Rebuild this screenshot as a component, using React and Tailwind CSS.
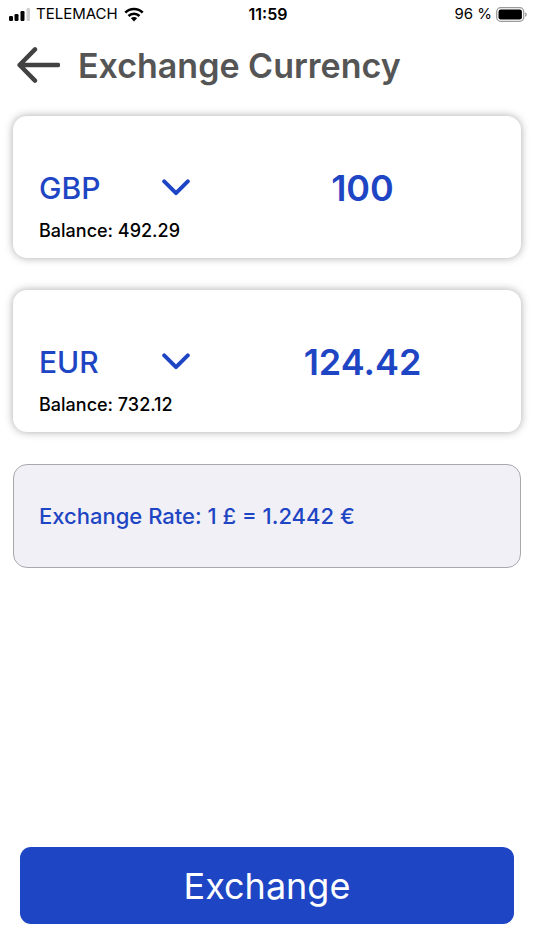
import { useState } from "react"

const currencies = {
    GBP: { symbol: "£", balance: "492.29" },
    EUR: { symbol: "€", balance: "732.12" }
}

const RATE = 1.2442

function SignalIcon() {
    return (
        <svg viewBox="0 0 22 13" className="w-[22px] h-[13px]" aria-hidden="true">
            <rect x="1" y="8" width="4" height="5" rx="1.2" />
            <rect x="6.5" y="6" width="4" height="7" rx="1.2" />
            <rect x="12.5" y="3" width="4" height="10" rx="1.2" />
            <rect x="18.5" y="0" width="3.5" height="13" rx="1.2" fill="#cfcfcf" />
        </svg>
    )
}

function WifiIcon() {
    return (
        <svg viewBox="0 0 20 15" className="w-5 h-[15px]" fill="none" stroke="#000" strokeWidth="2.6" aria-hidden="true">
            <path d="M1.3 5.6C6.2 0.7 13.8 0.7 18.7 5.6" />
            <path d="M4.5 9C7.6 5.9 12.4 5.9 15.5 9" />
            <path d="M10 14.4L6.9 11.3C8.6 9.7 11.4 9.7 13.1 11.3Z" fill="#000" stroke="none" />
        </svg>
    )
}

function BatteryIcon() {
    return (
        <svg viewBox="0 0 32 15" className="w-8 h-[15px]" aria-hidden="true">
            <rect x="0.7" y="0.7" width="27" height="13.6" rx="4" fill="none" stroke="#9a9a9a" strokeWidth="1.3" />
            <rect x="2.5" y="2.5" width="23.4" height="10" rx="2.2" />
            <path d="M29.2 5.2C31.3 6 31.3 9 29.2 9.8Z" fill="#9a9a9a" />
        </svg>
    )
}

function StatusBar() {
    return (
        <div className="grid grid-cols-3 items-center h-7 pl-2 pr-1.5 text-[15px] text-black">
            <div className="flex items-center gap-1.5">
                <SignalIcon />
                <span>TELEMACH</span>
                <WifiIcon />
            </div>
            <span className="text-center text-[16px] font-semibold">11:59</span>
            <div className="flex items-center justify-end gap-1">
                <span>96 %</span>
                <BatteryIcon />
            </div>
        </div>
    )
}

function CurrencyCard({ id, currency, onCurrency, amount, onAmount }) {
    return (
        <section className="h-[142px] px-[26px] pt-[50px] rounded-[14px] bg-white shadow-[0_0_8px_rgba(0,0,0,0.34)]">
            <div className="flex items-center gap-10 h-11 text-[#1e45c3]">
                <div className="relative w-[151px] shrink-0">
                    <select
                        aria-label={`Currency ${id}`}
                        value={currency}
                        onChange={(e) => onCurrency(e.target.value)}
                        className="w-full h-11 appearance-none bg-transparent text-[30px] font-medium outline-none"
                    >
                        {Object.keys(currencies).map((code) => (
                            <option key={code} value={code}>{code}</option>
                        ))}
                    </select>
                    <svg
                        viewBox="0 0 28 17"
                        className="absolute right-0 top-[13px] w-7 h-[17px] pointer-events-none"
                        fill="none"
                        stroke="currentColor"
                        strokeWidth="4"
                        strokeLinecap="round"
                        strokeLinejoin="round"
                        aria-hidden="true"
                    >
                        <path d="M2.2 2.4L14 14.2L25.8 2.4" />
                    </svg>
                </div>
                <input
                    aria-label={`Amount ${id}`}
                    type="text"
                    inputMode="decimal"
                    value={amount}
                    onChange={(e) => onAmount(e.target.value)}
                    className="w-full min-w-0 h-11 bg-transparent text-center text-[36px] font-semibold outline-none"
                />
            </div>
            <p className="mt-[9px] text-[18px] leading-6 font-medium text-black">
                Balance: {currencies[currency].balance}
            </p>
        </section>
    )
}

export default function App() {
    const [from, setFrom] = useState("GBP")
    const [to, setTo] = useState("EUR")
    const [amount, setAmount] = useState("100")
    const [result, setResult] = useState("124.42")

    const handleAmount = (value) => {
        setAmount(value)
        setResult((Number(value) * RATE).toFixed(2))
    }

    return (
        <div className="min-h-screen flex flex-col bg-white font-['Inter','Liberation_Sans',sans-serif]">
            <StatusBar />

            <header className="flex items-center gap-[18px] h-[74px] px-[17px]">
                <button type="button" aria-label="Back">
                    <svg
                        viewBox="0 0 43 36"
                        className="w-[43px] h-9"
                        fill="none"
                        stroke="#424242"
                        strokeWidth="4.4"
                        strokeLinecap="round"
                        strokeLinejoin="round"
                        aria-hidden="true"
                    >
                        <path d="M18 2.4L2.6 18L18 33.6M2.6 18H41" />
                    </svg>
                </button>
                <h1 className="text-[34px] font-semibold text-[#555555]">Exchange Currency</h1>
            </header>

            <main className="flex-1 flex flex-col gap-8 px-[13px] pt-[14px]">
                <CurrencyCard id="from" currency={from} onCurrency={setFrom} amount={amount} onAmount={handleAmount} />
                <CurrencyCard id="to" currency={to} onCurrency={setTo} amount={result} onAmount={setResult} />
                <section className="flex items-center h-[104px] px-[25px] rounded-[14px] border border-[#a9a9ad] bg-[#f1f0f6]">
                    <p className="text-[22px] font-medium text-[#1e45c3]">
                        Exchange Rate: 1 {currencies[from].symbol} = {RATE} {currencies[to].symbol}
                    </p>
                </section>
            </main>

            <footer className="px-5 pb-[26px]">
                <button type="button" className="w-full h-[77px] rounded-[11px] bg-[#1e45c3] text-white text-[36px]">
                    Exchange
                </button>
            </footer>
        </div>
    )
}
